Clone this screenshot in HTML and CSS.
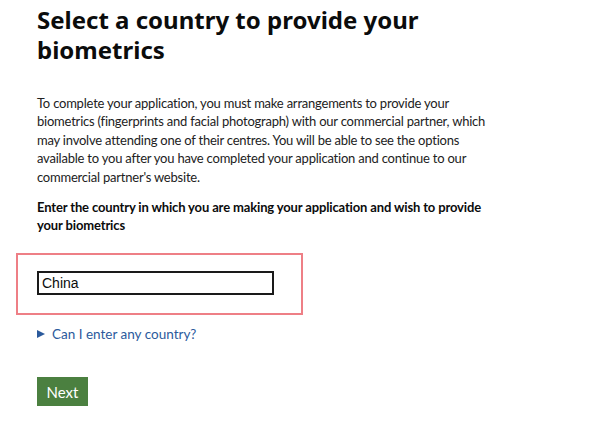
FILE: index.html
```html
<!DOCTYPE html>
<html lang="en">
<head>
<meta charset="utf-8">
<title>Select a country to provide your biometrics</title>
<link rel="stylesheet" href="styles.css">
</head>
<body>
<main class="page">
  <h1 class="title">Select a country to provide your biometrics</h1>
  <p class="body-text">To complete your application, you must make arrangements to provide your biometrics (fingerprints and facial photograph) with our commercial partner, which may involve attending one of their centres. You will be able to see the options available to you after you have completed your application and continue to our commercial partner's website.</p>
  <label class="label" for="country">Enter the country in which you are making your application and wish to provide your biometrics</label>
  <div class="highlight">
    <input class="input" id="country" type="text" value="China">
  </div>
  <details class="details">
    <summary class="summary"><span class="arrow"></span><span class="summary-text">Can I enter any country?</span></summary>
  </details>
  <button class="button" type="button">Next</button>
</main>
</body>
</html>
```
FILE: styles.css
```css
* { box-sizing: border-box; }
body {
  margin: 0;
  background: #fff;
  color: #0b0c0c;
  font-family: "Lato", "Liberation Sans", sans-serif;
}
.page {
  padding: 5px 0 0 37px;
  width: 595px;
}
.title {
  font-family: "Noto Sans", "Lato", sans-serif;
  font-size: 24px;
  line-height: 30px;
  font-weight: 700;
  margin: 0 0 30px;
  width: 420px;
}
.body-text {
  font-size: 13px;
  line-height: 18.4px;
  margin: -1px 0 12px;
  width: 468px;
  color: #222;
  letter-spacing: -0.22px;
}
.label {
  display: block;
  font-size: 13px;
  line-height: 18px;
  font-weight: 700;
  width: 460px;
  letter-spacing: -0.14px;
}
.highlight {
  margin: 19px 0 0 -21px;
  width: 287px;
  height: 62px;
  border: 2px solid #ee7f86;
  padding: 16px 0 0 19px;
}
.input {
  display: block;
  width: 237px;
  height: 24px;
  border: 2px solid #1a1a1a;
  padding: 0 3px;
  font-family: "Liberation Sans", Arial, sans-serif;
  font-size: 14px;
  color: #0b0c0c;
  outline: none;
}
.details {
  margin-top: 10px;
}
.summary {
  list-style: none;
  display: flex;
  align-items: center;
  gap: 7px;
  color: #2b5a9c;
  font-size: 13.5px;
  line-height: 18px;
}
.summary::-webkit-details-marker { display: none; }
.arrow {
  width: 0;
  height: 0;
  border-top: 4.5px solid transparent;
  border-bottom: 4.5px solid transparent;
  border-left: 8px solid #2b5a9c;
}
.button {
  margin-top: 34px;
  display: block;
  width: 51px;
  height: 29px;
  background: #4b8040;
  border: 0;
  box-shadow: 0 2px 0 #1e3a1b;
  color: #fff;
  font-family: "Lato", "Liberation Sans", sans-serif;
  font-size: 15px;
  padding: 0;
}
```
